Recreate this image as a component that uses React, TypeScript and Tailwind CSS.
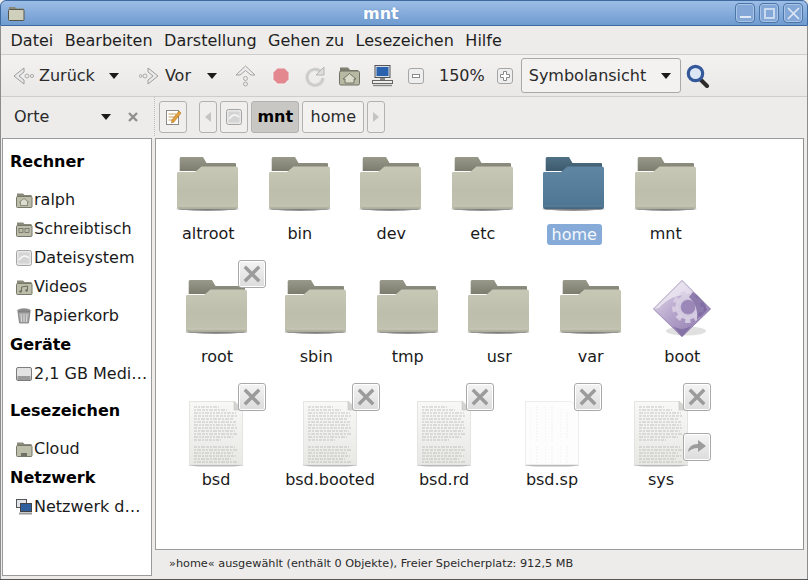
const Folder = ({ blue = false }: { blue?: boolean }) => {
  const id = blue ? 'fb' : 'fg';
  return (
    <svg width="64" height="56" viewBox="-1 0 64 56" className="block">
      <defs>
        <linearGradient id={id} x1="0" y1="0" x2="0" y2="1">
          <stop offset="0" stopColor={blue ? '#5f86a2' : '#c7c8b5'} />
          <stop offset="0.55" stopColor={blue ? '#567e9b' : '#bdbeab'} />
          <stop offset="0.9" stopColor={blue ? '#4f7693' : '#c0c1ae'} />
          <stop offset="1" stopColor={blue ? '#446681' : '#aaab98'} />
        </linearGradient>
        <linearGradient id={id + 't'} x1="0" y1="0" x2="0" y2="1">
          <stop offset="0" stopColor={blue ? '#4f7085' : '#989989'} />
          <stop offset="1" stopColor={blue ? '#3d5a6d' : '#7c7d6f'} />
        </linearGradient>
        <radialGradient id={id + 's'}>
          <stop offset="0" stopColor="#000" stopOpacity="0.55" />
          <stop offset="0.85" stopColor="#000" stopOpacity="0.4" />
          <stop offset="1" stopColor="#000" stopOpacity="0" />
        </radialGradient>
      </defs>
      <ellipse cx="30.5" cy="52" rx="33" ry="2" fill={'url(#' + id + 's)'} />
      <path d="M2.7 1.5 Q2.7 0 4 0 H26 L29.5 6 H58 Q59 6 59 7 V14 H2.7 Z" fill={'url(#' + id + 't)'} />
      <path d="M0 16 Q0 15 1.5 15 H18 L24.5 9.5 H59 Q61 9.5 61 11.5 V49.5 Q61 52 59 52 H2 Q0 52 0 49.5 Z" fill={'url(#' + id + ')'} />
      <path d="M0.6 49 H60.4" stroke={blue ? '#6a8ca6' : '#d2d3c2'} strokeWidth="1" opacity="0.7" />
    </svg>
  );
};

const docLines = [4, 7, 10, 13, 16, 19, 22, 25, 28, 31, 34, 37, 44, 47, 50, 53, 56, 59];
const docEnds = [30, 38, 47, 48, 44, 47, 47, 48, 46, 48, 44, 32, 46, 48, 44, 47, 42, 48];
const dashes = ['3 1 2 1 4 1', '2 1 4 1 3 1', '4 1 2 1 2 1', '3 1 3 1 2 1'];

const Doc = ({ faint = false }: { faint?: boolean }) => (
  <svg width="54" height="66" viewBox="0 0 54 66" className="block">
    <defs>
      <linearGradient id="docg" x1="0" y1="0" x2="0" y2="1">
        <stop offset="0" stopColor="#f8f8f7" />
        <stop offset="1" stopColor="#e8e8e4" />
      </linearGradient>
    </defs>
    <ellipse cx="27" cy="64" rx="29" ry="1.6" fill="#000" opacity="0.28" />
    <path d="M0.5 0.5 H46 L53.5 8 V63.5 H0.5 Z" fill={faint ? '#fdfdfd' : 'url(#docg)'} stroke={faint ? '#ececec' : '#e4e4e0'} />
    {docLines.map((y, i) => (
      <path
        key={y}
        d={`M5 ${y + 2} H${docEnds[i]}`}
        stroke={faint ? '#dcdcdc' : '#a0a0a0'}
        strokeWidth={faint ? 0.5 : 0.7}
        strokeDasharray={faint ? '1 5 2 7' : dashes[i % 4]}
        opacity={faint ? 0.7 : 0.8}
      />
    ))}
    {!faint && <path d="M45 0.5 V9 H53.5 Z" fill="#d4d4d0" stroke="#c4c4c0" strokeWidth="0.6" />}
  </svg>
);

const BootIcon = () => (
  <svg width="58" height="64" viewBox="0 0 58 64" className="block">
    <defs>
      <linearGradient id="bootg" x1="0" y1="0" x2="1" y2="1">
        <stop offset="0" stopColor="#e9e2ef" />
        <stop offset="0.5" stopColor="#b3a1c9" />
        <stop offset="1" stopColor="#8672a8" />
      </linearGradient>
      <clipPath id="bootc">
        <path d="M29 0 L58 29 L29 57 L0 29 Z" />
      </clipPath>
    </defs>
    <ellipse cx="33" cy="51" rx="20" ry="4.5" fill="#000" opacity="0.12" />
    <path d="M29 0 L58 29 L29 57 L0 29 Z" fill="url(#bootg)" />
    <g clipPath="url(#bootc)">
      <path d="M6 28 Q20 12 44 15 L29 0 L0 29 Z" fill="#f3eff6" opacity="0.7" />
      <circle cx="35" cy="27" r="13" fill="none" stroke="#d8cfe3" strokeWidth="6" strokeDasharray="5 4" opacity="0.9" />
      <circle cx="35" cy="27" r="10" fill="none" stroke="#d8cfe3" strokeWidth="5" opacity="0.9" />
      <circle cx="35" cy="27" r="7" fill="#9c88b8" />
      <path d="M40 12 Q52 20 54 30 L44 40 Q46 26 36 17 Z" fill="#75609b" opacity="0.75" />
      <path d="M20 46 L29 57 L38 46 Q29 52 20 46 Z" fill="#6f5b94" opacity="0.55" />
    </g>
    <path d="M29 0.5 L57.5 29 L29 56.5 L0.5 29 Z" fill="none" stroke="#8f7daa" strokeWidth="0.6" />
  </svg>
);

const Emblem = ({ kind = 'x' }: { kind?: 'x' | 'link' }) => (
  <div className="w-[28px] h-[28px] rounded-[3px] border border-[#a9a9a9] bg-gradient-to-b from-[#f4f4f4] to-[#dcdcdc] flex items-center justify-center shadow-[0_0_0_1px_#fff_inset]">
    {kind === 'x' ? (
      <svg width="18" height="18" viewBox="0 0 18 18">
        <path d="M3 3 L15 15 M15 3 L3 15" stroke="#9b9b9b" strokeWidth="3.4" strokeLinecap="square" />
      </svg>
    ) : (
      <svg width="20" height="16" viewBox="0 0 20 16">
        <path d="M1 13 Q2 5 11 5 V1 L19 7 L11 13 V9 Q5 9 1 13 Z" fill="#9c9c9c" />
      </svg>
    )}
  </div>
);

const SmallFolder = ({ children }: { children?: React.ReactNode }) => (
  <svg width="17" height="16" viewBox="0 0 17 16" className="shrink-0">
    <path d="M1 1.5 H7 L8.5 3 H15.5 V5 H1 Z" fill="#8a8a7a" />
    <rect x="0.5" y="4.5" width="15.5" height="11" rx="1" fill="#bdbeaa" stroke="#77776a" />
    {children}
  </svg>
);

const HomeGlyph = () => <path d="M8 6.5 L12.5 10 H11.5 V13.5 H4.5 V10 H3.5 Z" fill="#ddded0" stroke="#6f6f63" strokeWidth="0.7" />;

const DiskIcon = () => (
  <svg width="16" height="16" viewBox="0 0 16 16" className="shrink-0">
    <rect x="0.5" y="0.5" width="15" height="15" rx="2" fill="#e8e8e8" stroke="#a5a5a5" />
    <rect x="2.5" y="2.5" width="11" height="11" rx="1" fill="#d4d4d4" />
    <path d="M3 10 Q8 3 13 8" stroke="#f7f7f7" strokeWidth="1.5" fill="none" />
  </svg>
);

const places = [
  { label: 'ralph', icon: <SmallFolder><HomeGlyph /></SmallFolder> },
  {
    label: 'Schreibtisch',
    icon: (
      <SmallFolder>
        <rect x="3" y="7.5" width="4" height="4" fill="none" stroke="#6f6f63" strokeWidth="0.8" />
        <rect x="9" y="7.5" width="4" height="4" fill="none" stroke="#6f6f63" strokeWidth="0.8" />
      </SmallFolder>
    )
  },
  { label: 'Dateisystem', icon: <DiskIcon /> },
  {
    label: 'Videos',
    icon: (
      <SmallFolder>
        <path d="M5.5 12.5 V8 L11.5 7 V11.5" stroke="#6f6f63" fill="none" />
        <circle cx="4.5" cy="12.5" r="1.2" fill="#6f6f63" />
        <circle cx="10.5" cy="11.5" r="1.2" fill="#6f6f63" />
      </SmallFolder>
    )
  },
  {
    label: 'Papierkorb',
    icon: (
      <svg width="16" height="16" viewBox="0 0 16 16" className="shrink-0">
        <ellipse cx="8" cy="2.8" rx="6.5" ry="2" fill="#8f8f8f" stroke="#666" strokeWidth="0.6" />
        <path d="M2 4 L3.5 15 H12.5 L14 4 Z" fill="#a8a8a8" stroke="#6e6e6e" strokeWidth="0.7" />
        <path d="M5 6 L5.7 14 M8 6 V14 M11 6 L10.3 14" stroke="#dedede" strokeWidth="0.9" />
      </svg>
    )
  }
];

const SideHead = ({ children, className = '' }: { children: React.ReactNode; className?: string }) => (
  <div className={`h-[29px] flex items-center pl-[7px] font-bold text-black ${className}`}>{children}</div>
);

const SideRow = ({ icon, label, className = '' }: { icon: React.ReactNode; label: string; className?: string }) => (
  <div className={`h-[29px] flex items-center pl-[13px] whitespace-nowrap text-[#1a1a1a] ${className}`}>
    <span className="w-[18px] flex justify-start">{icon}</span>
    {label}
  </div>
);

const Sidebar = () => (
  <div className="w-[150px] shrink-0 ml-[1px] bg-white border border-[#9b9b9b] pt-[8px] overflow-hidden">
    <SideHead>Rechner</SideHead>
    <div className="mt-[9px]">
      {places.map((p) => (
        <SideRow key={p.label} icon={p.icon} label={p.label} />
      ))}
    </div>
    <SideHead>Geräte</SideHead>
    <SideRow
      label="2,1 GB Medi…"
      icon={
        <svg width="16" height="14" viewBox="0 0 16 14">
          <rect x="0.5" y="0.5" width="15" height="13" rx="1.5" fill="#e2e2e2" stroke="#7d7d7d" />
          <rect x="1.5" y="9" width="13" height="4" fill="#9a9a9a" />
        </svg>
      }
    />
    <SideHead className="mt-[8px]">Lesezeichen</SideHead>
    <SideRow
      className="mt-[9px]"
      label="Cloud"
      icon={
        <SmallFolder>
          <rect x="5" y="12" width="6" height="3" fill="#6f6f63" />
        </SmallFolder>
      }
    />
    <SideHead>Netzwerk</SideHead>
    <SideRow
      label="Netzwerk d…"
      icon={
        <svg width="16" height="16" viewBox="0 0 16 16">
          <rect x="0.5" y="0.5" width="10" height="8" fill="#dfe4ea" stroke="#555" />
          <rect x="4.5" y="4.5" width="11" height="8" fill="#2f5f9f" stroke="#444" />
          <rect x="3" y="13.5" width="13" height="2" fill="#999" />
        </svg>
      }
    />
  </div>
);

const Label = ({ children, selected = false }: { children: string; selected?: boolean }) => (
  <div className="h-[22px] flex items-center justify-center">
    <span className={selected ? 'bg-[#86abd9] text-[#f4f7fb] rounded-[3px] px-[5px] leading-[21px]' : 'text-[#1a1a1a]'}>{children}</span>
  </div>
);

const row1 = ['altroot', 'bin', 'dev', 'etc', 'home', 'mnt'];
const row2 = ['sbin', 'tmp', 'usr', 'var'];

const FileItem = ({
  name,
  width,
  faint = false,
  link = false
}: {
  name: string;
  width: string;
  faint?: boolean;
  link?: boolean;
}) => (
  <div className={width}>
    <div className="relative w-[54px] mx-auto">
      <Doc faint={faint} />
      <div className="absolute left-[49px] top-[-18px]">
        <Emblem />
      </div>
      {link && (
        <div className="absolute left-[49px] top-[32px]">
          <Emblem kind="link" />
        </div>
      )}
    </div>
    <div className="mt-[2px]">
      <Label>{name}</Label>
    </div>
  </div>
);

const IconView = () => (
  <div className="flex-1 bg-white border border-[#9b9b9b] border-r-[#8f8f8f] overflow-hidden min-w-0">
    <div className="flex pt-[18px] pl-[6.5px]">
      {row1.map((name) => (
        <div key={name} className="w-[91.5px]">
          <div className="flex justify-center">
            <Folder blue={name === 'home'} />
          </div>
          <div className="mt-[10px]">
            <Label selected={name === 'home'}>{name}</Label>
          </div>
        </div>
      ))}
    </div>
    <div className="flex mt-[35px] pl-[15.5px]">
      <div className="w-[91px] mr-[8px]">
        <div className="relative flex justify-center">
          <Folder />
          <div className="absolute left-[66px] top-[-20px]">
            <Emblem />
          </div>
        </div>
        <div className="mt-[10px]">
          <Label>root</Label>
        </div>
      </div>
      {row2.map((name) => (
        <div key={name} className="w-[91.5px]">
          <div className="flex justify-center">
            <Folder />
          </div>
          <div className="mt-[10px]">
            <Label>{name}</Label>
          </div>
        </div>
      ))}
      <div className="w-[91.5px]">
        <div className="flex justify-center h-[56px]">
          <BootIcon />
        </div>
        <div className="mt-[10px]">
          <Label>boot</Label>
        </div>
      </div>
    </div>
    <div className="flex mt-[33px] pl-[3px]">
      <FileItem name="bsd" width="w-[114px]" />
      <FileItem name="bsd.booted" width="w-[114px]" />
      <FileItem name="bsd.rd" width="w-[114px]" />
      <FileItem name="bsd.sp" width="w-[102px]" faint />
      <FileItem name="sys" width="w-[116px]" link />
    </div>
  </div>
);

const Caret = ({ className = '' }: { className?: string }) => (
  <svg width="10" height="6" viewBox="0 0 10 6" className={`shrink-0 ${className}`}>
    <path d="M0 0 H10 L5 6 Z" fill="#1a1a1a" />
  </svg>
);

const Toolbar = () => (
  <div className="h-[42px] flex items-center border-b border-[#cfcdca] bg-gradient-to-b from-[#f3f2f1] to-[#e9e8e6] text-[#2a2a2a]">
    <svg width="22" height="22" viewBox="0 0 22 22" className="ml-[11px] shrink-0">
      <path d="M12 3 L2 11 L12 19 V15 L7 11 L12 7 Z" fill="#e9e9e9" stroke="#9d9d9d" />
      <circle cx="15" cy="11" r="2" fill="none" stroke="#aaa" />
      <circle cx="20" cy="11" r="1.6" fill="none" stroke="#aaa" />
    </svg>
    <span className="ml-[5px]">Zurück</span>
    <Caret className="ml-[14px]" />
    <svg width="21" height="22" viewBox="0 0 21 22" className="ml-[20px] shrink-0">
      <path d="M9 3 L19 11 L9 19 V15 L14 11 L9 7 Z" fill="#e9e9e9" stroke="#9d9d9d" />
      <circle cx="6" cy="11" r="2" fill="none" stroke="#aaa" />
      <circle cx="1.6" cy="11" r="1.4" fill="none" stroke="#aaa" />
    </svg>
    <span className="ml-[5px]">Vor</span>
    <Caret className="ml-[16px]" />
    <svg width="21" height="22" viewBox="0 0 21 22" className="ml-[18px] shrink-0">
      <path d="M10.5 1 L20 10 H16 L10.5 5.5 L5 10 H1 Z" fill="#ececec" stroke="#a2a2a2" />
      <circle cx="10.5" cy="13.5" r="2" fill="none" stroke="#aaa" />
      <circle cx="10.5" cy="19" r="2" fill="none" stroke="#aaa" />
    </svg>
    <svg width="20" height="20" viewBox="0 0 20 20" className="ml-[15px] shrink-0">
      <circle cx="10" cy="10" r="9.5" fill="#efefef" />
      <path d="M6.5 2.5 H13.5 L17.5 6.5 V13.5 L13.5 17.5 H6.5 L2.5 13.5 V6.5 Z" fill="#e4888f" />
    </svg>
    <svg width="22" height="22" viewBox="0 0 22 22" className="ml-[13px] shrink-0">
      <path d="M17 7 A8 8 0 1 0 19 13" fill="none" stroke="#d4d4d4" strokeWidth="3.4" />
      <path d="M17 7 A8 8 0 1 0 19 13" fill="none" stroke="#bcbcbc" strokeWidth="0.7" />
      <path d="M20 2 V10 H12 Z" fill="#dedede" stroke="#b5b5b5" />
    </svg>
    <svg width="21" height="20" viewBox="0 0 21 20" className="ml-[13px] shrink-0">
      <path d="M1 1.5 H9 L11 4 H19 V7 H1 Z" fill="#7f7f6f" />
      <rect x="0.5" y="5" width="20" height="14" rx="1.5" fill="#b8b9a3" stroke="#6f6f63" />
      <path d="M10.5 7.5 L17 13 H15 V17 H6 V13 H4 Z" fill="#dcdcca" stroke="#5f5f55" strokeWidth="0.8" />
    </svg>
    <svg width="21" height="22" viewBox="0 0 21 22" className="ml-[12px] shrink-0">
      <rect x="3" y="0.5" width="15" height="12" fill="#d8dee6" stroke="#555" />
      <rect x="4.5" y="2" width="12" height="9" fill="#2a62ad" />
      <path d="M8 13 H13 V15 H8 Z" fill="#888" />
      <rect x="0.5" y="15.5" width="20" height="3" fill="#eee" stroke="#666" />
      <path d="M1 20.5 H20" stroke="#888" strokeWidth="1.4" />
    </svg>
    <div className="ml-[15px] w-[16px] h-[16px] rounded-[3px] border border-[#a5a5a5] bg-[#eeeeee] flex items-center justify-center shrink-0">
      <div className="w-[8px] h-[4px] border border-[#8a8a8a] bg-white"></div>
    </div>
    <span className="ml-[15px]">150%</span>
    <div className="ml-[12px] w-[16px] h-[16px] rounded-[3px] border border-[#a5a5a5] bg-[#eeeeee] flex items-center justify-center shrink-0">
      <svg width="10" height="10" viewBox="0 0 10 10">
        <path d="M3.5 0.5 H6.5 V3.5 H9.5 V6.5 H6.5 V9.5 H3.5 V6.5 H0.5 V3.5 H3.5 Z" fill="#fff" stroke="#8a8a8a" />
      </svg>
    </div>
    <div className="ml-[8px] w-[160px] h-[35px] rounded-[3px] border border-[#a8a8a8] bg-[#f3f2f1] flex items-center pl-[7px] shrink-0 text-[#2a2a2a]">
      <span>Symbolansicht</span>
      <Caret className="ml-[15px]" />
    </div>
    <svg width="24" height="24" viewBox="0 0 24 24" className="ml-[5px] shrink-0">
      <path d="M14 15 L21 22" stroke="#2c2c2c" strokeWidth="4" strokeLinecap="round" />
      <circle cx="9.5" cy="9.5" r="7.2" fill="#dbe6f4" stroke="#34589a" strokeWidth="3.2" />
    </svg>
  </div>
);

const PathBtn = ({ children, className = '' }: { children: React.ReactNode; className?: string }) => (
  <div className={`h-[32px] rounded-[3px] border border-[#b4b2af] flex items-center justify-center shrink-0 ${className}`}>{children}</div>
);

const LocationBar = () => (
  <div className="h-[41px] flex items-center text-[#2a2a2a] pb-[2px]">
    <span className="ml-[13px]">Orte</span>
    <Caret className="ml-[52px]" />
    <svg width="12" height="12" viewBox="0 0 12 12" className="ml-[16px] shrink-0">
      <path d="M2 2 L10 10 M10 2 L2 10" stroke="#8f8f8f" strokeWidth="2.4" />
    </svg>
    <div className="ml-[15px] w-[2px] h-[39px] border-l border-dotted border-[#bdbdbd]"></div>
    <PathBtn className="ml-[3px] w-[28px] bg-[#f0efee]">
      <svg width="18" height="18" viewBox="0 0 18 18">
        <rect x="2.5" y="2.5" width="12" height="14" fill="#fff" stroke="#8a8a8a" />
        <path d="M4.5 6 H12 M4.5 9 H12 M4.5 12 H9" stroke="#c4a060" />
        <path d="M8 12 L15 3 L17 5 L10 14 L7.5 15 Z" fill="#e5a13c" stroke="#a96f1e" strokeWidth="0.6" />
      </svg>
    </PathBtn>
    <PathBtn className="ml-[12px] w-[18px] bg-[#efeeed]">
      <svg width="6" height="10" viewBox="0 0 6 10">
        <path d="M6 0 V10 L0 5 Z" fill="#c4c4c4" />
      </svg>
    </PathBtn>
    <PathBtn className="ml-[3px] w-[28px] bg-[#f0efee]">
      <DiskIcon />
    </PathBtn>
    <PathBtn className="ml-[3px] w-[48px] bg-[#c9c7c4] font-bold text-black">mnt</PathBtn>
    <PathBtn className="ml-[3px] w-[62px] bg-[#f3f2f1]">home</PathBtn>
    <PathBtn className="ml-[3px] w-[18px] bg-[#efeeed]">
      <svg width="6" height="10" viewBox="0 0 6 10">
        <path d="M0 0 V10 L6 5 Z" fill="#c4c4c4" />
      </svg>
    </PathBtn>
  </div>
);

const WinBtn = ({ children }: { children: React.ReactNode }) => (
  <div className="w-[20px] h-[20px] rounded-[4px] border border-[#4c76a8] bg-[#83a8d8] flex items-center justify-center shadow-[0_0_0_1px_#a9c4e6_inset]">
    {children}
  </div>
);

const TitleBar = () => (
  <div className="relative h-[26px] rounded-t-[6px] border border-[#3e6a9f] bg-gradient-to-b from-[#9cbde6] to-[#6f9bd0] flex items-center justify-end pr-[4px] gap-[4px]">
    <svg width="17" height="15" viewBox="0 0 17 15" className="absolute left-[7px] top-[5px]">
      <path d="M1 1 H7 L8.5 2.5 H16 V5 H1 Z" fill="#8a8a7a" />
      <rect x="0.5" y="3.5" width="15.5" height="11" rx="1" fill="#cfd0bb" stroke="#55554c" />
    </svg>
    <span className="absolute left-[362px] top-[2px] font-bold text-white leading-[22px] [text-shadow:0_0_2px_#6b94c8]">mnt</span>
    <WinBtn>
      <div className="w-[11px] h-[2px] bg-[#dfe9f6] mt-[8px]"></div>
    </WinBtn>
    <WinBtn>
      <div className="w-[11px] h-[11px] border-2 border-[#c9daef]"></div>
    </WinBtn>
    <WinBtn>
      <svg width="13" height="13" viewBox="0 0 13 13">
        <path d="M1 1 L12 12 M12 1 L1 12" stroke="#dfe9f6" strokeWidth="1.6" />
      </svg>
    </WinBtn>
  </div>
);

const menus = ['Datei', 'Bearbeiten', 'Darstellung', 'Gehen zu', 'Lesezeichen', 'Hilfe'];

export default function App() {
  return (
    <div className="w-[808px] h-[580px] overflow-hidden bg-[#edecea] font-['DejaVu_Sans',sans-serif] text-[16px] flex flex-col border-b border-[#555]">
      <TitleBar />
      <div className="flex flex-col flex-1 min-h-0 border-x border-[#8c8c8c]">
        <div className="h-[29px] flex items-center gap-[11.5px] pl-[9.5px] pt-[2px] border-b border-[#cfcdca] text-[#1f1f1f]">
          {menus.map((m) => (
            <span key={m}>{m}</span>
          ))}
        </div>
        <Toolbar />
        <LocationBar />
        <div className="flex flex-1 min-h-0 pb-[3px]">
          <Sidebar />
          <div className="flex-1 min-w-0 flex flex-col ml-[3px] mr-[3px]">
            <IconView />
            <div className="h-[26px] flex items-center pl-[14px] pt-[2px] text-[11.25px] text-[#2a2a2a] shrink-0">
              »home« ausgewählt (enthält 0 Objekte), Freier Speicherplatz: 912,5 MB
            </div>
          </div>
        </div>
      </div>
    </div>
  );
}
